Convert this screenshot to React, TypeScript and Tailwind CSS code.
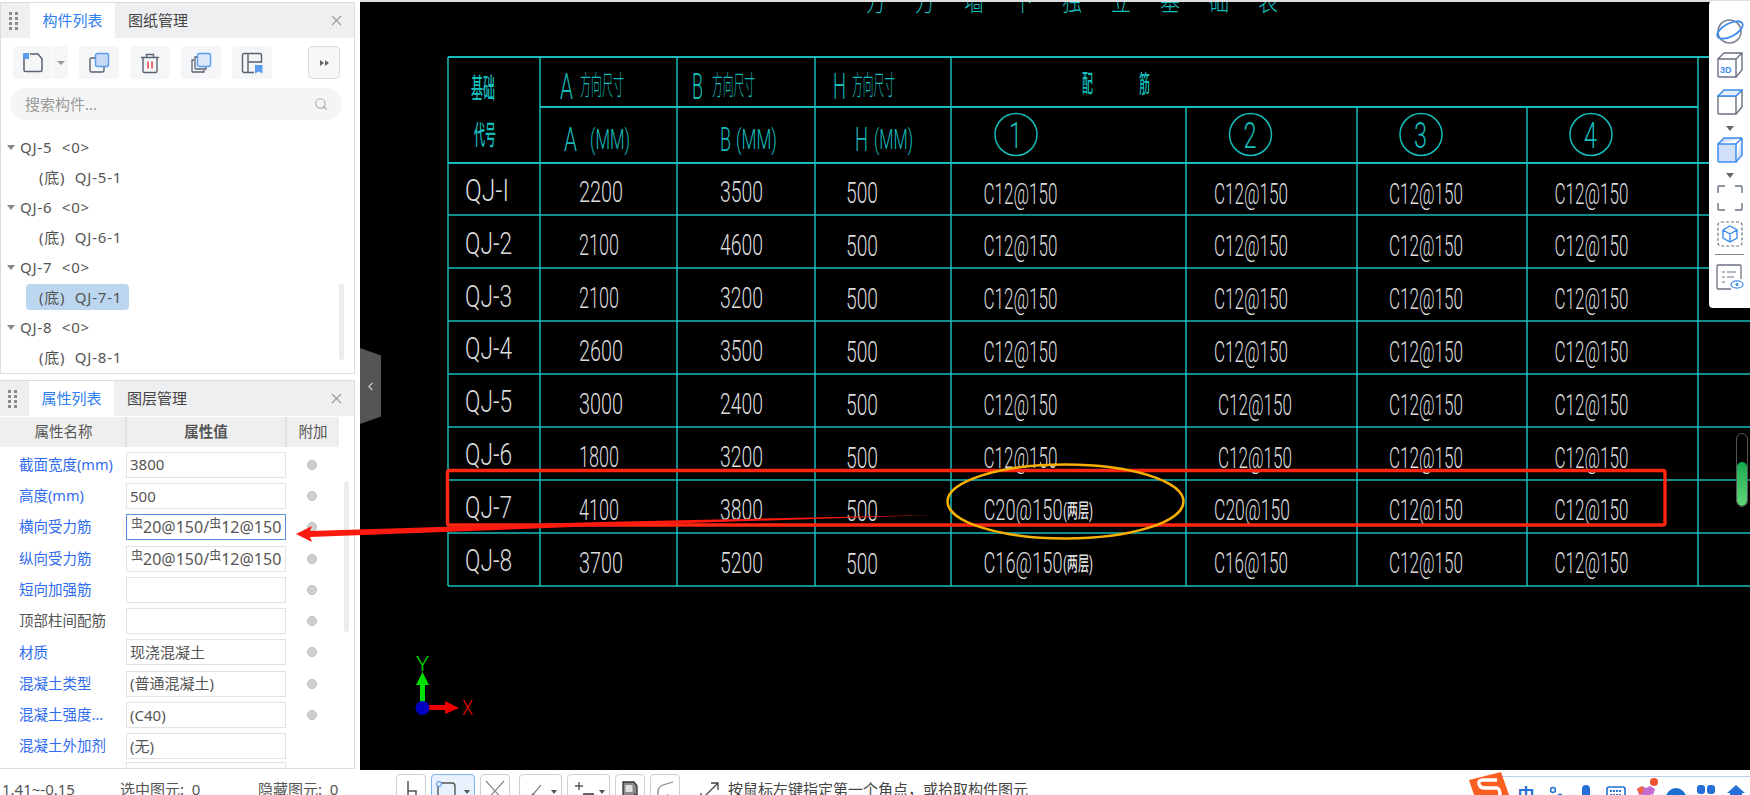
import React from 'react';
import { ChevronLeft, Search, X } from 'lucide-react';

const cyan = '#14bcbc';
const white = '#dcdcdc';

const rows = [
  { name: 'QJ-I', a: '2200', b: '3500', bars: ['C12@150', 'C12@150', 'C12@150', 'C12@150'] },
  { name: 'QJ-2', a: '2100', b: '4600', bars: ['C12@150', 'C12@150', 'C12@150', 'C12@150'] },
  { name: 'QJ-3', a: '2100', b: '3200', bars: ['C12@150', 'C12@150', 'C12@150', 'C12@150'] },
  { name: 'QJ-4', a: '2600', b: '3500', bars: ['C12@150', 'C12@150', 'C12@150', 'C12@150'] },
  { name: 'QJ-5', a: '3000', b: '2400', bars: ['C12@150', 'C12@150', 'C12@150', 'C12@150'] },
  { name: 'QJ-6', a: '1800', b: '3200', bars: ['C12@150', 'C12@150', 'C12@150', 'C12@150'] },
  { name: 'QJ-7', a: '4100', b: '3800', bars: ['C20@150', 'C20@150', 'C12@150', 'C12@150'] },
  { name: 'QJ-8', a: '3700', b: '5200', bars: ['C16@150', 'C16@150', 'C12@150', 'C12@150'] },
];

const treeGroups = ['QJ-5', 'QJ-6', 'QJ-7', 'QJ-8'];

const props = [
  { label: '截面宽度(mm)', value: '3800', blue: true, dot: true },
  { label: '高度(mm)', value: '500', blue: true, dot: true },
  { label: '横向受力筋', value: 'bar', blue: true, dot: true, active: true },
  { label: '纵向受力筋', value: 'bar', blue: true, dot: true },
  { label: '短向加强筋', value: '', blue: true, dot: true },
  { label: '顶部柱间配筋', value: '', blue: false, dot: true },
  { label: '材质', value: '现浇混凝土', blue: true, dot: true },
  { label: '混凝土类型', value: '(普通混凝土)', blue: true, dot: true },
  { label: '混凝土强度...', value: '(C40)', blue: true, dot: true },
  { label: '混凝土外加剂', value: '(无)', blue: true, dot: false },
];

// condensed CAD lettering, squeezed to the measured width
const CadText: React.FC<{ x: number; y: number; w: number; size?: number; fill?: string; bold?: boolean; children: string }> = ({
  x,
  y,
  w,
  size = 29,
  fill = white,
  bold,
  children,
}) => (
  <text
    x={x}
    y={y}
    textLength={w}
    lengthAdjust="spacingAndGlyphs"
    fontSize={size}
    fill={fill}
    fontWeight={bold ? 500 : 300}
    fontFamily="Roboto, 'Noto Sans CJK SC', sans-serif"
  >
    {children}
  </text>
);

const CadDrawing = () => {
  const hLines: [number, number, number, number][] = [
    [57, 448, 1750, 2],
    [107, 540, 1698, 2],
    [163, 448, 1750, 2],
    [215, 448, 1750, 1.5],
    [268, 448, 1750, 1.5],
    [321, 448, 1750, 1.5],
    [374, 448, 1750, 1.5],
    [427, 448, 1750, 1.5],
    [480, 448, 1750, 1.5],
    [533, 448, 1750, 1.5],
    [586, 448, 1750, 1.5],
  ];
  const vLines: [number, number][] = [
    [448, 57],
    [540, 57],
    [677, 57],
    [815, 57],
    [951, 57],
    [1186, 107],
    [1357, 107],
    [1527, 107],
    [1698, 57],
  ];
  const titleChars = ['方', '方', '墙', '下', '独', '立', '基', '础', '表'];
  const circles = [
    { cx: 1016, n: '1' },
    { cx: 1250.5, n: '2' },
    { cx: 1421, n: '3' },
    { cx: 1591, n: '4' },
  ];

  return (
    <svg className="absolute left-0 top-0" width={1390} height={770} viewBox="360 0 1390 770">
      {titleChars.map((c, i) => (
        <CadText key={i} x={866 + i * 49} y={11} w={20} size={27} fill={cyan}>
          {c}
        </CadText>
      ))}
      {hLines.map(([y, x1, x2, sw]) => (
        <line key={y} x1={x1} x2={x2} y1={y} y2={y} stroke={cyan} strokeWidth={sw} />
      ))}
      {vLines.map(([x, y1]) => (
        <line key={x} x1={x} x2={x} y1={y1} y2={586} stroke={cyan} strokeWidth={1.5} />
      ))}

      <CadText x={471} y={98} w={24} size={27} fill={cyan} bold>基础</CadText>
      <CadText x={474} y={145} w={22} size={27} fill={cyan} bold>代号</CadText>

      <CadText x={560} y={99} w={13} size={36} fill={cyan}>A</CadText>
      <CadText x={580} y={95} w={44} size={27} fill={cyan}>方向尺寸</CadText>
      <CadText x={692} y={99} w={11} size={36} fill={cyan}>B</CadText>
      <CadText x={712} y={95} w={43} size={27} fill={cyan}>方向尺寸</CadText>
      <CadText x={833} y={99} w={13} size={36} fill={cyan}>H</CadText>
      <CadText x={852} y={95} w={43} size={27} fill={cyan}>方向尺寸</CadText>
      <CadText x={1082} y={92} w={11} size={24} fill={cyan} bold>配</CadText>
      <CadText x={1139} y={92} w={11} size={24} fill={cyan} bold>筋</CadText>

      <CadText x={564} y={151} w={13} size={34} fill={cyan}>A</CadText>
      <CadText x={590} y={149} w={40} size={28} fill={cyan}>(MM)</CadText>
      <CadText x={720} y={151} w={11} size={34} fill={cyan}>B</CadText>
      <CadText x={736} y={149} w={41} size={28} fill={cyan}>(MM)</CadText>
      <CadText x={855} y={151} w={13} size={34} fill={cyan}>H</CadText>
      <CadText x={874} y={149} w={39} size={28} fill={cyan}>(MM)</CadText>

      {circles.map((c) => (
        <g key={c.n}>
          <circle cx={c.cx} cy={134.5} r={21} fill="none" stroke={cyan} strokeWidth={1.5} />
          <CadText x={c.cx - 7} y={148} w={13} size={36} fill={cyan}>
            {c.n}
          </CadText>
        </g>
      ))}

      {rows.map((r, i) => {
        const nameY = 201 + i * 52.8;
        const numY = 202 + i * 53;
        const barY = 203.5 + i * 52.8;
        const narrowA = r.a === '2100' || r.a === '1800' || r.a === '4100';
        const col2X = i === 4 || i === 5 ? 1218 : 1214;
        return (
          <g key={r.name}>
            <CadText x={465} y={nameY} w={r.name === 'QJ-I' ? 44 : 47} size={32}>{r.name}</CadText>
            <CadText x={579} y={numY} w={narrowA ? 40 : 44}>{r.a}</CadText>
            <CadText x={720} y={numY} w={43}>{r.b}</CadText>
            <CadText x={846} y={numY + 1} w={32}>500</CadText>
            <CadText x={983.5} y={barY} w={i >= 6 ? 79 : 74}>{r.bars[0]}</CadText>
            {i >= 6 && (
              <CadText x={1063} y={barY - 2} w={30} size={20} bold>
                (两层)
              </CadText>
            )}
            <CadText x={col2X} y={barY} w={i === 6 ? 76 : 74}>{r.bars[1]}</CadText>
            <CadText x={1389} y={barY} w={74}>{r.bars[2]}</CadText>
            <CadText x={1554.5} y={barY} w={74}>{r.bars[3]}</CadText>
          </g>
        );
      })}

      {/* UCS axes */}
      <rect x={420} y={685} width={5} height={18} fill="#00e000" />
      <polygon points="422.5,672 416,685 429,685" fill="#00e000" />
      <CadText x={416} y={671} w={13} size={20} fill="#00e000">Y</CadText>
      <rect x={428} y={705} width={18} height={5} fill="#f00000" />
      <polygon points="459,708 445,701 445,714" fill="#f00000" />
      <CadText x={462} y={715} w={11} size={20} fill="#f00000">X</CadText>
      <circle cx={422.5} cy={708} r={7} fill="#0000c0" />
    </svg>
  );
};

// hand annotations lying over both the panel and the drawing
const Annotations = () => (
  <svg className="absolute left-0 top-0 pointer-events-none" width={1750} height={795}>
    <rect x={447.5} y={470.5} width={1217.5} height={54.5} rx={2} fill="none" stroke="#ff2612" strokeWidth={3.4} />
    <ellipse cx={1065.5} cy={501.5} rx={118} ry={37} fill="none" stroke="#f7b000" strokeWidth={2.5} />
    <polygon points="296,534 312,526 310,531 600,522 935,515 600,526 310,537 312,542" fill="#ff1a10" />
  </svg>
);

const Grip = () => (
  <div className="grid grid-cols-2 gap-x-[3px] gap-y-[2px] w-[8px] ml-[8px] shrink-0">
    {Array.from({ length: 8 }).map((_, i) => (
      <span key={i} className="w-[3px] h-[3px] bg-[#8a8a8a]" />
    ))}
  </div>
);

const PanelHeader: React.FC<{ active: string; other: string }> = ({ active, other }) => (
  <div className="flex items-center h-[35px] bg-[#eeeff1] shrink-0">
    <Grip />
    <div className="ml-[13px] w-[85px] h-full bg-white flex items-center justify-center text-[15px] text-[#2f80ed]">{active}</div>
    <div className="ml-[13px] text-[15px] text-[#444]">{other}</div>
    <X className="ml-auto mr-[9px] text-[#9a9a9a]" size={17} strokeWidth={1.6} />
  </div>
);

const ToolBtn: React.FC<{ children: React.ReactNode; className?: string }> = ({ children, className }) => (
  <div className={`h-[33px] bg-[#f5f6f7] rounded flex items-center justify-center ${className ?? ''}`}>{children}</div>
);

const ComponentPanel = () => (
  <section className="relative mt-[2px] h-[372px] border border-[#dcdcdc] flex flex-col">
    <PanelHeader active="构件列表" other="图纸管理" />
    <div className="flex items-center h-[33px] mt-[8px] pl-[12px]">
      <ToolBtn className="w-[39px] rounded-r-none">
        <svg width="22" height="22" viewBox="0 0 22 22" fill="none">
          <path d="M2 5v13a1.5 1.5 0 0 0 1.5 1.5h15a1.5 1.5 0 0 0 1.5-1.5V7l-4-5H8" stroke="#5a6270" strokeWidth="1.5" />
          <rect x="1" y="1" width="6" height="6" fill="#5b9bf0" />
        </svg>
      </ToolBtn>
      <ToolBtn className="w-[15px] ml-[1px] rounded-l-none">
        <span className="w-0 h-0 border-x-[4px] border-x-transparent border-t-[4px] border-t-[#999]" />
      </ToolBtn>
      <ToolBtn className="w-[40px] ml-[11px]">
        <svg width="22" height="22" viewBox="0 0 22 22" fill="none">
          <rect x="7.5" y="1.5" width="13" height="13" rx="2" fill="#c5daf5" stroke="#5b9bf0" strokeWidth="1.4" />
          <path d="M7 6H3.5A1.5 1.5 0 0 0 2 7.5v11A1.5 1.5 0 0 0 3.5 20h11a1.5 1.5 0 0 0 1.5-1.5V15" stroke="#5a6270" strokeWidth="1.4" />
        </svg>
      </ToolBtn>
      <ToolBtn className="w-[40px] ml-[11px]">
        <svg width="22" height="22" viewBox="0 0 22 22" fill="none">
          <path d="M2 5.5h18M7.5 5V2.5h7V5M4 6v13a1.5 1.5 0 0 0 1.5 1.5h11A1.5 1.5 0 0 0 18 19V6" stroke="#5a6270" strokeWidth="1.4" />
          <path d="M9 9.5v7M13 9.5v7" stroke="#e8474c" strokeWidth="1.6" />
        </svg>
      </ToolBtn>
      <ToolBtn className="w-[40px] ml-[11px]">
        <svg width="22" height="22" viewBox="0 0 22 22" fill="none">
          <rect x="7.5" y="1.5" width="13" height="13" rx="2" fill="#dbe8fa" stroke="#5b9bf0" strokeWidth="1.4" />
          <path d="M7 5H5v11a1 1 0 0 0 1 1h10v-2M4 8H2v11a1 1 0 0 0 1 1h11v-2" stroke="#5a6270" strokeWidth="1.3" />
        </svg>
      </ToolBtn>
      <ToolBtn className="w-[40px] ml-[11px]">
        <svg width="22" height="22" viewBox="0 0 22 22" fill="none">
          <path d="M13 20.5H3A1.5 1.5 0 0 1 1.5 19V3A1.5 1.5 0 0 1 3 1.5h16A1.5 1.5 0 0 1 20.5 3v8M7 2v18M7 10h13" stroke="#5a6270" strokeWidth="1.4" />
          <path d="M14 13h7.5v8.5l-3.7-2-3.8 2z" fill="#5b9bf0" />
        </svg>
      </ToolBtn>
      <div className="ml-[36px] w-[32px] h-[33px] rounded border border-[#ddd] bg-[#f7f7f7] flex items-center justify-center gap-[1px]">
        <span className="w-0 h-0 border-y-[3.5px] border-y-transparent border-l-[4px] border-l-[#666]" />
        <span className="w-0 h-0 border-y-[3.5px] border-y-transparent border-l-[4px] border-l-[#666]" />
      </div>
    </div>
    <div className="mt-[9px] ml-[9px] w-[332px] h-[32px] rounded-full bg-[#f5f5f5] flex items-center pl-[15px] pr-[14px] text-[15px] text-[#999]">
      <span>搜索构件...</span>
      <Search className="ml-auto text-[#aaa]" size={14} />
    </div>
    <div className="mt-[12px] flex flex-col text-[15px] text-[#555] tracking-[0.8px]">
      {treeGroups.map((g) => {
        const selected = g === 'QJ-7';
        return (
          <div key={g}>
            <div className="h-[30px] flex items-center pl-[6px] whitespace-pre">
              <span className="mr-[5px] w-0 h-0 border-x-[4px] border-x-transparent border-t-[5px] border-t-[#888]" />
              {`${g}  <0>`}
            </div>
            <div className="h-[30px] flex items-center pl-[25px]">
              <span className={`h-[26px] w-[103px] pl-[13px] flex items-center rounded-sm whitespace-pre ${selected ? 'bg-[#bcd6f0]' : ''}`}>
                {`(底)  ${g}-1`}
              </span>
            </div>
          </div>
        );
      })}
    </div>
    <div className="absolute left-[338px] top-[281px] w-[5px] h-[76px] rounded bg-[#ececec]" />
  </section>
);

const RebarValue = () => (
  <span className="flex items-center text-[16px] whitespace-nowrap">
    <span className="text-[12px] -mt-[6px] ml-[1px]">虫</span>20@150/<span className="text-[12px] -mt-[6px]">虫</span>12@150
  </span>
);

const PropertyPanel = () => (
  <section className="relative mt-[6px] h-[389px] border border-[#dcdcdc] border-l-0 flex flex-col overflow-hidden">
    <PanelHeader active="属性列表" other="图层管理" />
    <div className="flex h-[30px] mt-[1px] w-[339px] bg-[#efefef] text-[14.5px] text-[#555] shrink-0">
      <div className="w-[125px] flex items-center justify-center pl-[2px]">属性名称</div>
      <div className="w-[162px] border-x-2 border-[#e0e0e0] flex items-center justify-center font-bold">属性值</div>
      <div className="flex-1 flex items-center justify-center">附加</div>
    </div>
    <div className="flex flex-col pt-[2px]">
      {props.map((p) => (
        <div key={p.label} className="flex items-center h-[31.3px] shrink-0">
          <div className={`w-[126px] pl-[19px] text-[14.5px] whitespace-nowrap ${p.blue ? 'text-[#2f6bee]' : 'text-[#555]'}`}>{p.label}</div>
          <div
            className={`w-[160px] h-[26px] border-[1.5px] flex items-center pl-[3px] text-[15px] text-[#555] overflow-hidden ${
              p.active ? 'border-[#5b8fe0]' : 'border-[#e2e2e2]'
            }`}
          >
            {p.value === 'bar' ? <RebarValue /> : p.value}
          </div>
          {p.dot && <span className="ml-[21px] w-[10px] h-[10px] rounded-full bg-[#cfcfcf] border border-[#bbb]" />}
        </div>
      ))}
      <div className="ml-[126px] w-[160px] h-[26px] border-[1.5px] border-[#e2e2e2] shrink-0" />
    </div>
    <div className="absolute left-[344px] top-[100px] w-[5px] h-[151px] rounded bg-[#ececec]" />
  </section>
);

const ViewTools = () => (
  <div className="absolute right-0 top-[1px] w-[41px] h-[307px] bg-white rounded-l-sm flex flex-col items-center pt-[16px]">
    <svg width="28" height="28" viewBox="0 0 28 28" fill="none">
      <circle cx="13.5" cy="14.5" r="11.5" stroke="#7a8290" strokeWidth="1.5" />
      <ellipse cx="14" cy="13" rx="14" ry="6.5" transform="rotate(-28 14 13)" stroke="#3f8cf0" strokeWidth="1.8" />
    </svg>
    <svg className="mt-[7px]" width="26" height="26" viewBox="0 0 26 26" fill="none">
      <path d="M1 7h18v18H2a1 1 0 0 1-1-1zM1 7l6-6h18v17l-6 7M19 7l6-6" stroke="#6a7280" strokeWidth="1.4" />
      <text x="3" y="21" fontSize="9" fontWeight="700" fill="#3f8cf0" fontFamily="'Liberation Sans', sans-serif">3D</text>
    </svg>
    <svg className="mt-[11px]" width="26" height="26" viewBox="0 0 26 26" fill="none">
      <path d="M1 7h18v18H2a1 1 0 0 1-1-1zM19 25l6-7V1M19 7l6-6" stroke="#6a7280" strokeWidth="1.4" />
      <path d="M1 7l6-6h18l-6 6z" stroke="#3f8cf0" strokeWidth="1.5" fill="#e4effc" />
    </svg>
    <span className="mt-[11px] w-0 h-0 border-x-[4px] border-x-transparent border-t-[5px] border-t-[#666]" />
    <svg className="mt-[6px]" width="26" height="26" viewBox="0 0 26 26" fill="none">
      <path d="M1 7h18v18H2a1 1 0 0 1-1-1zM19 25l6-7V1M19 7l6-6M1 7l6-6h18" fill="#cfe0f8" stroke="#3f8cf0" strokeWidth="1.5" />
    </svg>
    <span className="mt-[10px] w-0 h-0 border-x-[4px] border-x-transparent border-t-[5px] border-t-[#666]" />
    <svg className="mt-[7px]" width="26" height="26" viewBox="0 0 26 26" fill="none">
      <path d="M1 8V2a1 1 0 0 1 1-1h6M18 1h6a1 1 0 0 1 1 1v6M25 18v6a1 1 0 0 1-1 1h-6M8 25H2a1 1 0 0 1-1-1v-6" stroke="#6a7280" strokeWidth="1.4" />
    </svg>
    <svg className="mt-[10px]" width="26" height="26" viewBox="0 0 26 26" fill="none">
      <rect x="1" y="1" width="24" height="24" rx="3" stroke="#6a7280" strokeWidth="1.2" strokeDasharray="3 2" />
      <path d="M13 5l7 4v8l-7 4-7-4V9zM6 9l7 4 7-4M13 13v8" stroke="#3f8cf0" strokeWidth="1.4" />
    </svg>
    <span className="mt-[7px] w-[29px] h-[1px] bg-[#888]" />
    <svg className="mt-[9px]" width="28" height="26" viewBox="0 0 28 26" fill="none">
      <path d="M15 25H2a1 1 0 0 1-1-1V2a1 1 0 0 1 1-1h22a1 1 0 0 1 1 1v13" stroke="#6a7280" strokeWidth="1.3" />
      <path d="M6 8h3M11 8h9M6 13h3M11 13h7M6 18h3" stroke="#6a7280" strokeWidth="1.2" />
      <ellipse cx="21" cy="20.5" rx="6" ry="3.6" stroke="#3f8cf0" strokeWidth="1.3" />
      <circle cx="21" cy="20.5" r="1.6" fill="#3f8cf0" />
    </svg>
  </div>
);

const ZoomSlider = () => (
  <div className="absolute left-[1376px] top-[433px] w-[12px] h-[74px] rounded-full border border-[#555] flex flex-col justify-end overflow-hidden">
    <div className="h-[44px] rounded-full bg-gradient-to-b from-[#12a850] to-[#5ed878]" />
  </div>
);

const BarBtn: React.FC<{ w: string; active?: boolean; caret?: boolean; children: React.ReactNode }> = ({ w, active, caret, children }) => (
  <div className={`${w} h-[30px] shrink-0 rounded-t border ${active ? 'border-[#7fb0f0] bg-[#e8f1fc]' : 'border-[#cfcfcf] bg-white'} flex items-start pl-[3px] pt-[4px]`}>
    {children}
    {caret && <span className="ml-auto mr-[4px] mt-[11px] w-0 h-0 border-x-[3.5px] border-x-transparent border-t-[4px] border-t-[#555]" />}
  </div>
);

const StatusBar = () => (
  <footer className="h-[25px] flex items-start bg-white overflow-hidden relative shrink-0">
    <div className="w-[396px] flex shrink-0 text-[15px] text-[#555] pt-[9px] leading-[20px] whitespace-pre">
      <span className="ml-[2px] w-[118px]">1.41~-0.15</span>
      <span className="w-[138px]">选中图元:  0</span>
      <span>隐藏图元:  0</span>
    </div>
    <div className="flex gap-[5px] pt-[4px]">
      <BarBtn w="w-[30px]">
        <svg width="20" height="24" fill="none"><path d="M8 2v20M8 12h8v10" stroke="#555" strokeWidth="1.5" /></svg>
      </BarBtn>
      <BarBtn w="w-[44px]" active caret>
        <svg width="22" height="24" fill="none"><path d="M3 24V7a3 3 0 0 1 3-3h11a3 3 0 0 1 3 3v17" stroke="#555" strokeWidth="1.4" /><circle cx="4" cy="5" r="2.5" fill="#e8f1fc" stroke="#3f8cf0" /></svg>
      </BarBtn>
      <BarBtn w="w-[30px] mr-[4px]">
        <svg width="22" height="24" fill="none"><path d="M2 2l18 20M20 2L2 22" stroke="#888" strokeWidth="1.2" /></svg>
      </BarBtn>
      <BarBtn w="w-[43px]" caret>
        <svg width="24" height="24" fill="none"><path d="M3 24L18 6" stroke="#666" strokeWidth="1.1" /><circle cx="10" cy="16" r="1.6" fill="#666" /></svg>
      </BarBtn>
      <BarBtn w="w-[43px]" caret>
        <svg width="24" height="24" fill="none"><path d="M4 7h8M8 3v8" stroke="#555" strokeWidth="1.4" /><rect x="12" y="14" width="11" height="8" fill="#666" /></svg>
      </BarBtn>
      <BarBtn w="w-[30px]">
        <svg width="22" height="24" fill="none"><path d="M15 3H4v19h14V7z" fill="#8a8a8a" stroke="#333" strokeWidth="1.3" /><rect x="6.5" y="6" width="7" height="7" fill="#e0e0e0" /><path d="M15 14l7 5-4 1-1 4z" fill="#333" /></svg>
      </BarBtn>
      <BarBtn w="w-[30px]">
        <svg width="22" height="24" fill="none"><path d="M4 24V13q0-5 5-7l10-3" stroke="#888" strokeWidth="1.3" /><path d="M13 15l7 5-7 4z" fill="#555" /></svg>
      </BarBtn>
    </div>
    <svg className="ml-[20px] mt-[11px] shrink-0" width="20" height="20" fill="none">
      <path d="M1 19L18 2M11 2h7v7M1 12v7h7" stroke="#444" strokeWidth="1.3" />
    </svg>
    <span className="ml-[8px] pt-[9px] leading-[20px] text-[15px] text-[#444] whitespace-nowrap">按鼠标左键指定第一个角点，或拾取构件图元</span>

    {/* input method bar */}
    <div className="absolute left-[1500px] top-[6px] w-[250px] h-[30px] border-t border-l border-[#b8d0ee] text-[#2470d8]">
      <div className="grid grid-cols-[repeat(8,30px)] pl-[10px] pt-[8px] justify-items-center">
        <span className="text-[17px] leading-[20px] font-bold">中</span>
        <svg width="14" height="18" fill="#2470d8"><circle cx="4" cy="5" r="2.4" fill="none" stroke="#2470d8" strokeWidth="1.5" /><circle cx="11" cy="11" r="2.6" /></svg>
        <svg width="20" height="20" fill="#2470d8"><rect x="6" y="0" width="8" height="16" rx="4" /><path d="M2 11q1 6 8 6t8-6" fill="none" stroke="#2470d8" strokeWidth="1.5" /></svg>
        <svg width="20" height="18" fill="none"><rect x="1" y="2" width="18" height="14" rx="2" stroke="#2470d8" strokeWidth="1.6" /><path d="M4 6h12M4 10h12" stroke="#2470d8" strokeWidth="2" strokeDasharray="2 1" /></svg>
        <svg width="20" height="20"><path d="M1 4l5-3 4 2 4-2 5 3-2 6-2-1v9H5V9l-2 1z" fill="#c46ad0" /><path d="M1 4l5-3 2 4-4 5z" fill="#f2643c" /></svg>
        <svg width="20" height="20"><circle cx="10" cy="13" r="10" fill="#1c6fd0" /><circle cx="6" cy="13" r="2" fill="#fff" /><circle cx="14" cy="13" r="2" fill="#fff" /></svg>
        <svg width="18" height="18" fill="#2470d8"><rect x="0" y="0" width="8" height="9" rx="3" /><rect x="10" y="0" width="8" height="9" rx="3" /><rect x="0" y="11" width="18" height="7" /></svg>
        <svg width="18" height="18" fill="#2470d8"><path d="M9 0l9 8h-3v10H3V8H0z" /></svg>
      </div>
    </div>
    <svg className="absolute left-[1468px] top-[1px]" width="41" height="24" viewBox="0 0 41 24">
      <path d="M1 9l32-8 8 23H6z" fill="#f95f20" />
      <path d="M29 9H15q-5 0-4 4t6 4h12q3 1 3 7" fill="none" stroke="#fff" strokeWidth="3.4" />
    </svg>
    <span className="absolute left-[1650px] top-[8px] w-[8px] h-[8px] rounded-full bg-[#f25030]" />
  </footer>
);

export default function App() {
  return (
    <div className="relative w-[1750px] h-[795px] overflow-hidden bg-white flex flex-col font-['Noto_Sans','Noto_Sans_CJK_SC',sans-serif]">
      <div className="flex flex-1 min-h-0">
        <aside className="w-[355px] mr-[5px] shrink-0 flex flex-col">
          <ComponentPanel />
          <PropertyPanel />
        </aside>
        <main className="relative flex-1 bg-black overflow-hidden">
          <CadDrawing />
          <div className="absolute left-0 top-0 w-full h-[2px] bg-[#dedede]" />
          <div className="absolute left-0 top-[348px] w-[21px] h-[76px] bg-[#555] [clip-path:polygon(0_0,100%_10%,100%_90%,0_100%)] flex items-center justify-center">
            <ChevronLeft className="text-[#ccc]" size={13} />
          </div>
          <ViewTools />
          <ZoomSlider />
        </main>
      </div>
      <StatusBar />
      <Annotations />
    </div>
  );
}
